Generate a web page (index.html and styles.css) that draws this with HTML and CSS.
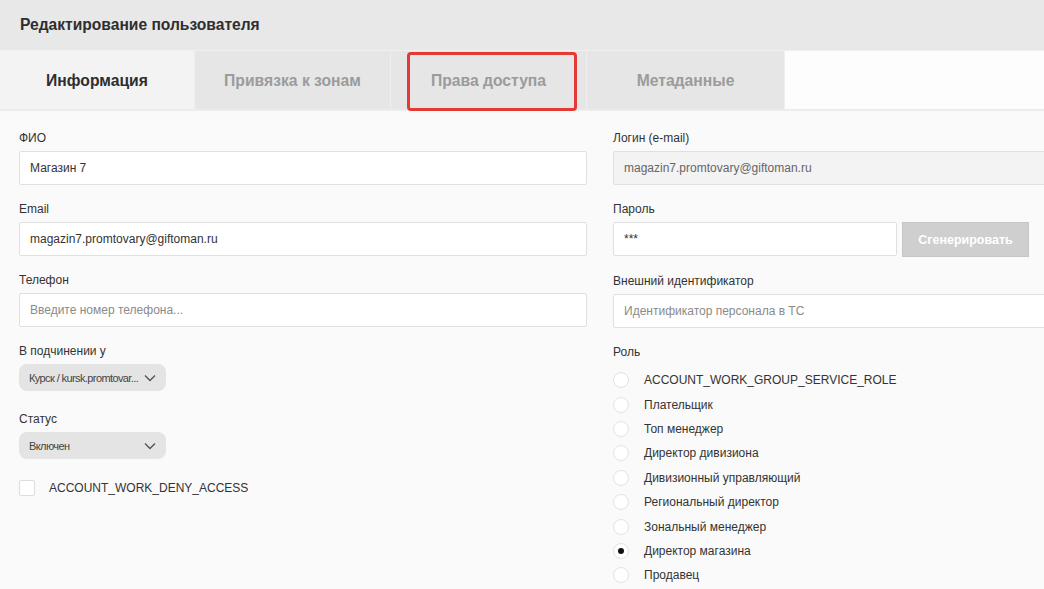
FILE: index.html
```html
<!DOCTYPE html>
<html lang="ru">
<head>
<meta charset="utf-8">
<title>Редактирование пользователя</title>
<link rel="stylesheet" href="styles.css">
</head>
<body>
<div class="page">
  <header class="head">Редактирование пользователя</header>
  <nav class="tabs">
    <div class="tab active">Информация</div>
    <div class="tab">Привязка к зонам</div>
    <div class="tab marked">Права доступа</div>
    <div class="tab wide">Метаданные</div>
    <div class="tab-rest"></div>
  </nav>
  <main class="form">
    <section class="col">
      <div class="field">
        <label class="lbl">ФИО</label>
        <div class="input">Магазин 7</div>
      </div>
      <div class="field">
        <label class="lbl">Email</label>
        <div class="input">magazin7.promtovary@giftoman.ru</div>
      </div>
      <div class="field">
        <label class="lbl">Телефон</label>
        <div class="input ph">Введите номер телефона...</div>
      </div>
      <div class="field sel-field">
        <label class="lbl">В подчинении у</label>
        <div class="select"><span class="sel-text">Курск / kursk.promtovar...</span><svg class="chev" width="12" height="8" viewBox="0 0 12 8"><path d="M1 1.5 L6 6.5 L11 1.5" fill="none" stroke="#555" stroke-width="1.4"/></svg></div>
      </div>
      <div class="field sel-field">
        <label class="lbl">Статус</label>
        <div class="select"><span class="sel-text">Включен</span><svg class="chev" width="12" height="8" viewBox="0 0 12 8"><path d="M1 1.5 L6 6.5 L11 1.5" fill="none" stroke="#555" stroke-width="1.4"/></svg></div>
      </div>
      <div class="check-row">
        <span class="checkbox"></span>
        <span class="opt">ACCOUNT_WORK_DENY_ACCESS</span>
      </div>
    </section>
    <section class="col">
      <div class="field">
        <label class="lbl">Логин (e-mail)</label>
        <div class="input disabled">magazin7.promtovary@giftoman.ru</div>
      </div>
      <div class="field">
        <label class="lbl">Пароль</label>
        <div class="pass-row">
          <div class="input pass">***</div>
          <button class="gen">Сгенерировать</button>
        </div>
      </div>
      <div class="field">
        <label class="lbl">Внешний идентификатор</label>
        <div class="input ph">Идентификатор персонала в ТС</div>
      </div>
      <div class="field">
        <label class="lbl">Роль</label>
        <ul class="roles">
          <li><span class="radio"></span>ACCOUNT_WORK_GROUP_SERVICE_ROLE</li>
          <li><span class="radio"></span>Плательщик</li>
          <li><span class="radio"></span>Топ менеджер</li>
          <li><span class="radio"></span>Директор дивизиона</li>
          <li><span class="radio"></span>Дивизионный управляющий</li>
          <li><span class="radio"></span>Региональный директор</li>
          <li><span class="radio"></span>Зональный менеджер</li>
          <li><span class="radio on"></span>Директор магазина</li>
          <li><span class="radio"></span>Продавец</li>
        </ul>
      </div>
    </section>
  </main>
</div>
</body>
</html>
```

FILE: styles.css
```css
* { box-sizing: border-box; }
html, body { margin: 0; padding: 0; }
body {
  width: 1044px;
  height: 589px;
  overflow: hidden;
  background: #fafafa;
  font-family: "Liberation Sans", Arial, sans-serif;
  color: #333;
}
.page { width: 1044px; }
.head {
  height: 51px;
  background: #e8e8e8;
  border-bottom: 1px solid #f0f0f0;
  padding: 0 20px;
  display: flex;
  align-items: center;
  font-weight: bold;
  font-size: 15.6px;
  color: #2e2e2e;
}
.tabs {
  display: flex;
  height: 60px;
  border-bottom: 2px solid #ececec;
}
.tab {
  width: 196px;
  background: #e6e6e6;
  border-right: 1px solid #efefef;
  display: flex;
  align-items: center;
  justify-content: center;
  padding-top: 1px;
  font-weight: bold;
  font-size: 15.7px;
  color: #9b9b9b;
  position: relative;
}
.tab:first-child { width: 195px; }
.tab.wide { width: 198px; }
.tab.active { background: #f3f3f3; color: #2e2e2e; }
.tab.marked::after {
  content: "";
  position: absolute;
  left: 16px;
  right: 9px;
  top: 1px;
  bottom: -2px;
  border: 3px solid #e53935;
  border-radius: 4px;
}
.tab-rest { flex: 1; background: #fdfdfd; }
.form {
  display: grid;
  grid-template-columns: 568px 568px;
  column-gap: 26px;
  padding: 20px 0 0 19px;
}
.field { margin-bottom: 17px; }
.sel-field { margin-bottom: 21px; }
.lbl {
  display: block;
  font-size: 12px;
  line-height: 14px;
  color: #333;
  margin-bottom: 6px;
}
.input {
  height: 34px;
  background: #fff;
  border: 1px solid #e0e0e0;
  border-radius: 2px;
  padding: 0 10px;
  display: flex;
  align-items: center;
  font-size: 12px;
  color: #333;
}
.input.ph { color: #8a8a8a; }
.input.disabled { background: #f3f3f3; color: #666; }
.pass-row { display: flex; gap: 5px; }
.input.pass { width: 284px; }
.gen {
  width: 127px;
  height: 35px;
  background: #cfcfcf;
  border: 1px solid #c6c6c6;
  border-radius: 0;
  color: #fff;
  font-family: "Liberation Sans", Arial, sans-serif;
  font-weight: bold;
  font-size: 12.5px;
  padding: 0;
}
.select {
  width: 147px;
  height: 27px;
  background: #e4e4e4;
  border-radius: 8px;
  display: flex;
  align-items: center;
  justify-content: space-between;
  padding: 0 10px;
  font-size: 11px;
  letter-spacing: -0.6px;
  color: #444;
}
.sel-text { white-space: nowrap; }
.chev { flex: none; }
.check-row {
  display: flex;
  align-items: center;
}
.checkbox {
  width: 16px;
  height: 16px;
  background: #fff;
  border: 1px solid #ddd;
  border-radius: 2px;
  margin-right: 14px;
}
.opt { font-size: 12px; color: #333; }
.roles {
  list-style: none;
  margin: 9px 0 0 0;
  padding: 0;
}
.roles li {
  display: flex;
  align-items: center;
  height: 24.4px;
  font-size: 12px;
  color: #333;
}
.radio {
  width: 16px;
  height: 16px;
  border-radius: 50%;
  background: #fff;
  border: 1px solid #e2e2e2;
  margin-right: 15px;
  display: flex;
  align-items: center;
  justify-content: center;
}
.radio.on::after {
  content: "";
  width: 6px;
  height: 6px;
  border-radius: 50%;
  background: #111;
}
```
